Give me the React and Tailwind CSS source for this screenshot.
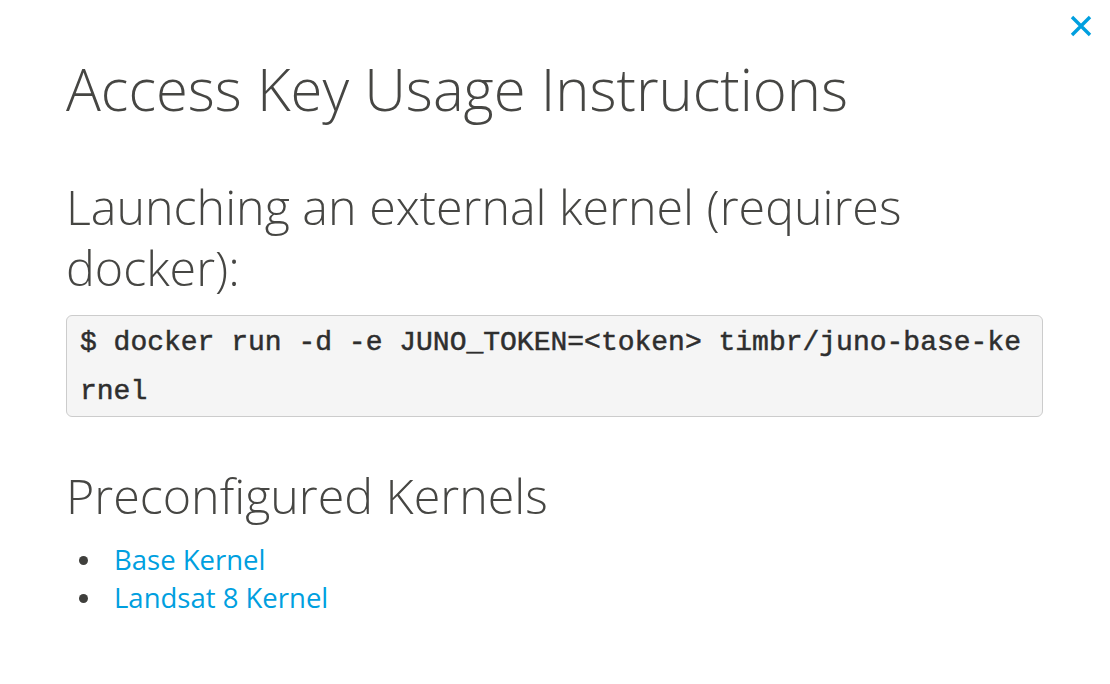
const App = () => {
    return (<div className="relative w-[1110px] h-[684px] bg-white text-[#464643] font-['Open_Sans',sans-serif]">
        <button className="absolute left-[1070px] top-[15px] w-[22px] h-[22px] text-[#009fdf]">
            <svg viewBox="0 0 22 22" width="22" height="22" fill="none" stroke="currentColor" strokeWidth="3.4" strokeLinecap="butt">
                <path d="M2 2 L20 20 M20 2 L2 20" />
            </svg>
        </button>

        <div className="pl-[66px] w-[1043px] pt-[56px]">
            <h1 className="text-[58px] leading-[66px] font-light">Access Key Usage Instructions</h1>

            <h2 className="mt-[54px] text-[48.4px] leading-[61px] font-light">Launching an external kernel (requires docker):</h2>

            <pre className="mt-[17px] bg-[#f5f5f5] border border-[#cccccc] rounded-[6px] px-[13px] pt-[2px] pb-0 text-[28px] leading-[49px] font-['Liberation_Mono',monospace] text-[#2e2e2e] whitespace-pre-wrap break-all [-webkit-text-stroke:0.5px_#2e2e2e]">$ docker run -d -e JUNO_TOKEN=&lt;token&gt; timbr/juno-base-kernel</pre>

            <h3 className="mt-[48px] text-[48.4px] leading-[61px] font-light">Preconfigured Kernels</h3>

            <ul className="mt-[15px] text-[27.5px] leading-[38px]">
                <li className="flex items-center">
                    <span className="ml-[13px] mr-[26px] w-[9px] h-[9px] rounded-full bg-[#3f3f3c]"></span>
                    <a href="#" className="text-[#009fdf]">Base Kernel</a>
                </li>
                <li className="flex items-center">
                    <span className="ml-[13px] mr-[26px] w-[9px] h-[9px] rounded-full bg-[#3f3f3c]"></span>
                    <a href="#" className="text-[#009fdf]">Landsat 8 Kernel</a>
                </li>
            </ul>
        </div>
    </div>);
}

export default App;
